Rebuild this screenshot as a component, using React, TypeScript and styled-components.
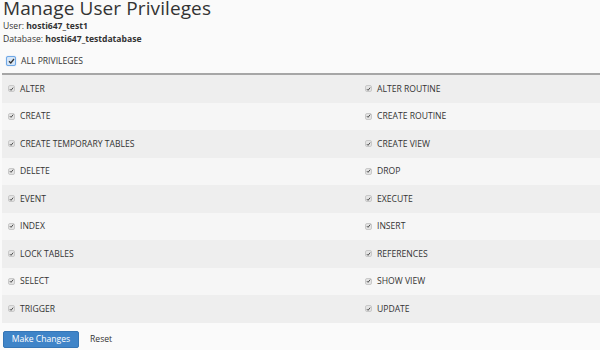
import styled, { createGlobalStyle } from "styled-components";

const GlobalStyle = createGlobalStyle`
  html, body {
    margin: 0;
    padding: 0;
    background: #fafafa;
    font-family: "Open Sans", "Liberation Sans", sans-serif;
    color: #333;
  }
`;

const Page = styled.div`
  width: 600px;
  height: 350px;
  overflow: hidden;
  padding: 0 0 0 2px;
  box-sizing: border-box;
`;

const Title = styled.h1`
  margin: 0 0 3px 1px;
  font-size: 19px;
  font-weight: 400;
  line-height: 17px;
  color: #333;
  letter-spacing: 0.1px;
`;

const Meta = styled.div`
  margin: 0 0 0 1px;
  font-size: 8.6px;
  line-height: 13px;
  color: #333;

  b {
    font-weight: 700;
  }
`;

const AllRow = styled.label`
  display: flex;
  align-items: center;
  gap: 5px;
  margin: 9px 0 0 4px;
  height: 12px;
  font-size: 8.6px;
  color: #333;
`;

const Table = styled.div`
  margin-top: 6px;
  border-top: 2px solid #a6a6a6;
  width: 598px;
`;

const Row = styled.div<{ $odd: boolean }>`
  display: grid;
  grid-template-columns: 357px 1fr;
  height: 27.5px;
  align-items: center;
  background: ${(p) => (p.$odd ? "#eeeeee" : "#f6f6f6")};
`;

const Cell = styled.label`
  display: flex;
  align-items: center;
  gap: 5px;
  padding-left: 6px;
  font-size: 8.6px;
  color: #333;
`;

const Box = styled.span<{ $big?: boolean }>`
  display: inline-flex;
  align-items: center;
  justify-content: center;
  box-sizing: border-box;
  width: ${(p) => (p.$big ? "10px" : "7px")};
  height: ${(p) => (p.$big ? "10px" : "7px")};
  border-radius: 2px;
  border: 1px solid ${(p) => (p.$big ? "#6fa8e6" : "#c9c9c9")};
  background: ${(p) => (p.$big ? "#d6e6f7" : "#e4e4e4")};
  box-shadow: ${(p) => (p.$big ? "0 0 1px #8ab8ee" : "none")};
`;

const Actions = styled.div`
  display: flex;
  align-items: center;
  gap: 2px;
  margin-top: 8px;
  margin-left: 1px;
`;

const PrimaryButton = styled.button`
  font-family: inherit;
  font-size: 8.6px;
  color: #fff;
  background: #3f84c8;
  border: 1px solid #3575b5;
  border-radius: 2px;
  height: 17px;
  width: 76px;
  padding: 0;
`;

const PlainButton = styled.button`
  font-family: inherit;
  font-size: 8.6px;
  color: #333;
  background: transparent;
  border: none;
  height: 17px;
  padding: 0 9px;
`;

const Check = ({ big }: { big?: boolean }) => (
  <Box $big={big}>
    <svg width={big ? 7 : 5} height={big ? 6 : 4} viewBox="0 0 7 6">
      <path d="M1 3.2 L2.8 5 L6 1" fill="none" stroke="#333" strokeWidth="1.3" />
    </svg>
  </Box>
);

const privileges: [string, string][] = [
  ["ALTER", "ALTER ROUTINE"],
  ["CREATE", "CREATE ROUTINE"],
  ["CREATE TEMPORARY TABLES", "CREATE VIEW"],
  ["DELETE", "DROP"],
  ["EVENT", "EXECUTE"],
  ["INDEX", "INSERT"],
  ["LOCK TABLES", "REFERENCES"],
  ["SELECT", "SHOW VIEW"],
  ["TRIGGER", "UPDATE"],
];

export default function App() {
  return (
    <>
      <GlobalStyle />
      <Page>
        <Title>Manage User Privileges</Title>
        <Meta>
          User: <b>hosti647_test1</b>
        </Meta>
        <Meta>
          Database: <b>hosti647_testdatabase</b>
        </Meta>
        <AllRow>
          <Check big />
          ALL PRIVILEGES
        </AllRow>
        <Table>
          {privileges.map(([a, b], i) => (
            <Row key={a} $odd={i % 2 === 0}>
              <Cell>
                <Check />
                {a}
              </Cell>
              <Cell>
                <Check />
                {b}
              </Cell>
            </Row>
          ))}
        </Table>
        <Actions>
          <PrimaryButton>Make Changes</PrimaryButton>
          <PlainButton>Reset</PlainButton>
        </Actions>
      </Page>
    </>
  );
}
